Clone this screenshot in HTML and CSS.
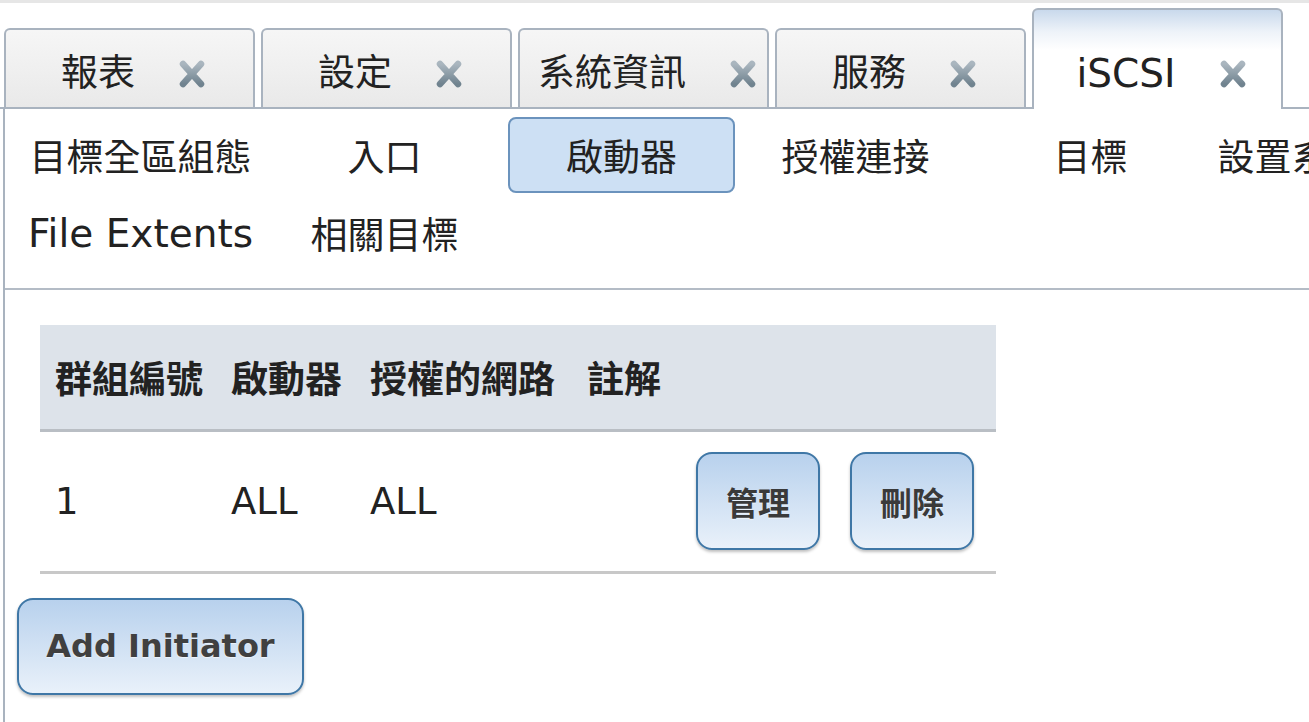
FILE: index.html
```html
<!DOCTYPE html>
<html lang="zh-Hant">
<head>
  <meta charset="UTF-8">
  <meta name="viewport" content="width=device-width, initial-scale=1.0">
  <title>iSCSI</title>
  <link rel="stylesheet" href="styles.css">
</head>
<body>

<div class="topbar"></div>

<div class="tabs">
  <div class="tab"><span>報表</span><svg class="close" viewBox="0 0 28 28"><use href="#x"/></svg></div>
  <div class="tab"><span>設定</span><svg class="close" viewBox="0 0 28 28"><use href="#x"/></svg></div>
  <div class="tab"><span>系統資訊</span><svg class="close" viewBox="0 0 28 28"><use href="#x"/></svg></div>
  <div class="tab"><span>服務</span><svg class="close" viewBox="0 0 28 28"><use href="#x"/></svg></div>
  <div class="tab active"><span class="en">iSCSI</span><svg class="close" viewBox="0 0 28 28"><use href="#x"/></svg></div>
</div>

<svg width="0" height="0" class="defs">
  <defs>
    <linearGradient id="xg" x1="0" y1="0" x2="0" y2="1">
      <stop offset="0" stop-color="#aab6bf"/>
      <stop offset="1" stop-color="#70838f"/>
    </linearGradient>
    <g id="x">
      <path d="M5 4 L23 24 M23 4 L5 24" stroke="url(#xg)" stroke-width="6.5" stroke-linecap="round"/>
    </g>
  </defs>
</svg>

<div class="panel">
  <div class="subnav">
    <a>目標全區組態</a>
    <a>入口</a>
    <a class="current">啟動器</a>
    <a>授權連接</a>
    <a>目標</a>
    <a>設置系統範圍</a>
    <a class="en">File Extents</a>
    <a>相關目標</a>
  </div>

  <div class="content">
    <table class="grid">
      <tr>
        <th class="c1">群組編號</th>
        <th class="c2">啟動器</th>
        <th class="c3">授權的網路</th>
        <th class="c4">註解</th>
        <th class="c5"></th>
        <th class="c6"></th>
      </tr>
      <tr>
        <td>1</td>
        <td>ALL</td>
        <td>ALL</td>
        <td></td>
        <td class="act"><button class="btn">管理</button></td>
        <td class="act last"><button class="btn">刪除</button></td>
      </tr>
    </table>

    <button class="btn add">Add Initiator</button>
  </div>
</div>

</body>
</html>
```

FILE: styles.css
```css
body {
  font-family: "DejaVu Sans", "Noto Sans CJK TC", sans-serif;
  font-size: 37px;
  color: #222;
  margin: 0;
  padding: 0;
  background-color: #fff;
  overflow: hidden;
  height: 722px;
}
.en {
  font-size: 39px;
}
.topbar {
  height: 3px;
  background-color: #e6e6e6;
}
.defs {
  position: absolute;
}
.tabs {
  display: flex;
  align-items: flex-end;
  gap: 6px;
  padding: 5px 0 0 4px;
  border-bottom: 2px solid #a9b3bf;
}
.tab {
  box-sizing: border-box;
  width: 251px;
  height: 79px;
  display: flex;
  align-items: flex-end;
  justify-content: center;
  gap: 43px;
  padding: 0 0 15px 8px;
  line-height: 36px;
  border: 2px solid #a9b3bf;
  border-bottom: none;
  border-radius: 6px 6px 0 0;
  background: linear-gradient(#f6f6f6, #e9e9e9);
}
.tab.active {
  height: 101px;
  margin-bottom: -2px;
  padding-bottom: 17px;
  background: linear-gradient(#c9d9ec 0, #eef3f9 22px, #fff 40px);
}
.close {
  width: 28px;
  height: 28px;
  margin-bottom: 4px;
}
.panel {
  margin-left: 3px;
  border-left: 2px solid #a9b3bf;
  height: 613px;
  overflow: hidden;
}
.subnav {
  display: grid;
  grid-template-columns: 248px 240px 234px 234px 236px 240px;
  grid-auto-rows: 78px;
  padding: 7px 0 16px 11px;
  border-bottom: 2px solid #b4bcc6;
}
.subnav a {
  display: flex;
  align-items: center;
  justify-content: center;
  margin: 1px 3px 1px 4px;
  white-space: nowrap;
  color: #222;
}
.subnav a.current {
  background-color: #cde0f4;
  border: 2px solid #6b93bd;
  border-radius: 8px;
}
.content {
  padding: 35px 0 0 35px;
}
.grid {
  width: 956px;
  table-layout: fixed;
  border-collapse: collapse;
}
th, td {
  box-sizing: border-box;
  padding: 0 0 0 15px;
  text-align: left;
  white-space: nowrap;
}
th {
  height: 105px;
  background-color: #dde3ea;
  border-bottom: 3px solid #b9bec4;
  font-weight: bold;
}
td {
  height: 142px;
  border-bottom: 3px solid #c8c8c8;
}
.c1 { width: 176px; }
.c2 { width: 139px; }
.c3 { width: 217px; }
.c4 { width: 106px; }
.c5 { width: 160px; }
.c6 { width: 158px; }
td.act {
  padding: 0;
  text-align: center;
}
td.act.last {
  padding-right: 10px;
}
.btn {
  font-family: "DejaVu Sans", "Noto Sans CJK TC", sans-serif;
  font-size: 32px;
  font-weight: bold;
  color: #3a3a3a;
  width: 124px;
  height: 98px;
  border: 2px solid #3f77a6;
  border-radius: 16px;
  background: linear-gradient(#b8d1ed, #e9f1fa);
  box-shadow: 0 2px 3px rgba(0, 0, 0, 0.25);
  text-shadow: 0 1px 1px rgba(255, 255, 255, 0.6);
}
.btn.add {
  width: 287px;
  height: 97px;
  margin: 24px 0 0 -23px;
  color: #404040;
}
```
